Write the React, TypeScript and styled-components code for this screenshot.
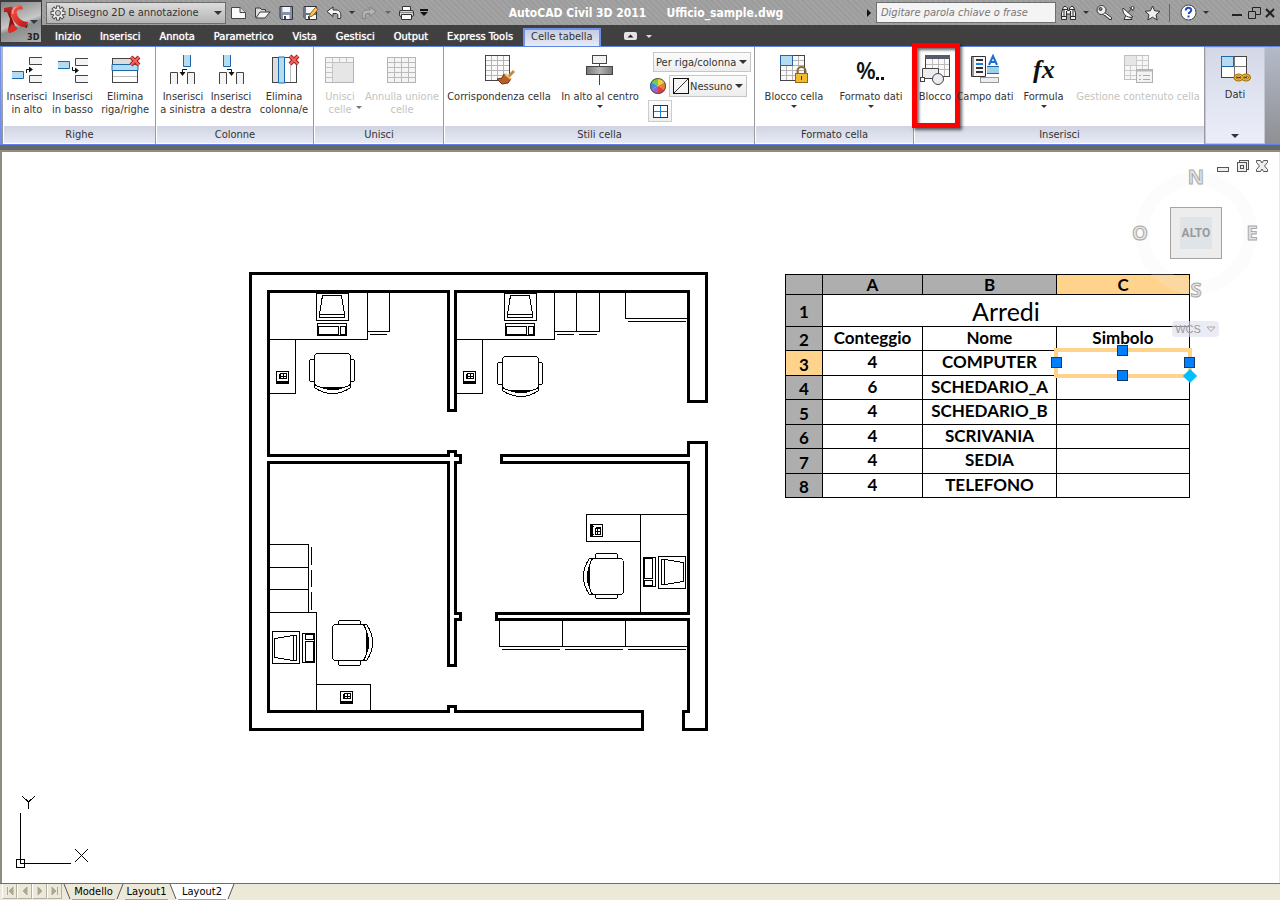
import React from "react";
import styled, { createGlobalStyle, css } from "styled-components";

const uiFont = `"DejaVu Sans Condensed", "DejaVu Sans", "Liberation Sans", sans-serif`;
const cadFont = `Lato, "Open Sans", sans-serif`;

const GlobalStyle = createGlobalStyle`
  * { box-sizing: border-box; }
  body { margin: 0; background: #fff; }
  button, input, select { font: inherit; color: inherit; margin: 0; }
  button { border: 0; padding: 0; background: none; cursor: pointer; }
  svg { display: block; flex: none; }
`;

const Window = styled.div`
  min-height: 100vh;
  display: flex;
  flex-direction: column;
  font: 11px/13px ${uiFont};
  color: #333;
`;

/* ---------- header ---------- */

const Header = styled.header`
  display: flex;
  background: #404040;
`;

const AppButton = styled.button`
  width: 42px;
  height: 43px;
  flex: none;
  background: linear-gradient(160deg, #808080, #c8c8c8 50%, #8c8c8c 60%, #b0b0b0);
  border: 1px solid #3c3c3c;
  border-top-width: 2px;
`;

const HeaderRows = styled.div`
  flex: 1;
  min-width: 0;
`;

const TitleRow = styled.div`
  height: 25px;
  display: flex;
  align-items: center;
  padding: 0 2px 0 4px;
  background: repeating-linear-gradient(45deg, #a3a3a3 0 2px, #9c9c9c 2px 4px);
`;

const SelectBox = styled.span<{ $width: number; $height: number; $plain?: boolean }>`
  position: relative;
  display: flex;
  align-items: center;
  width: ${(p) => p.$width}px;
  height: ${(p) => p.$height}px;
  background: ${(p) => (p.$plain ? "linear-gradient(#fbfbfb, #ededed)" : "linear-gradient(#dcdcdc, #b4b4b4)")};
  border: 1px solid ${(p) => (p.$plain ? "#c6c6c6" : "#6c6c6c")};
`;

const Select = styled.select<{ $left: number }>`
  appearance: none;
  width: 100%;
  height: 100%;
  border: 0;
  outline: 0;
  background: none;
  padding: 0 0 0 ${(p) => p.$left}px;
`;

const SelectArt = styled.span<{ $side: "left" | "right" }>`
  position: absolute;
  ${(p) => p.$side}: 3px;
  pointer-events: none;
`;

const QuickTools = styled.div`
  display: flex;
  align-items: center;
`;

const ToolButton = styled.button<{ $width?: number; $space?: number }>`
  width: ${(p) => p.$width ?? 24}px;
  height: 20px;
  margin-left: ${(p) => p.$space ?? 0}px;
  flex: none;
  display: flex;
  align-items: center;
  justify-content: center;
`;

const Title = styled.h1`
  flex: 1;
  margin: 0;
  display: flex;
  justify-content: center;
  gap: 20px;
  white-space: nowrap;
  font: bold 12px/16px ${uiFont};
  color: #fff;
`;

const SearchInput = styled.input`
  width: 180px;
  height: 21px;
  border: 1px solid #6f6f6f;
  background: #f4f4f4;
  padding: 0 4px;
  font-style: italic;
  font-size: 11px;
  &::placeholder { color: #777; opacity: 1; }
`;

const Divider = styled.span`
  width: 1px;
  height: 18px;
  margin: 0 6px 0 5px;
  background: #666;
`;

const TabRow = styled.nav`
  height: 21px;
  display: flex;
  align-items: stretch;
  padding: 3px 0 0 4px;
`;

const Tab = styled.button<{ $active?: boolean }>`
  padding: 0 10px 0 9px;
  white-space: nowrap;
  line-height: 13px;
  padding-bottom: 2px;
  color: #fff;
  text-shadow: 0 0 1px #fff;
  ${(p) =>
    p.$active &&
    css`
      padding: 0 6px 3px;
      color: #333;
      text-shadow: none;
      background: linear-gradient(#c5cce0, #e8ebf5);
      border: 2px solid #6f8fe8;
      border-width: 2px 2px 0;
    `}
`;

const TabTools = styled.div`
  display: flex;
  align-items: center;
  gap: 9px;
  padding: 0 0 2px 23px;
`;

const CollapseButton = styled.button`
  width: 13px;
  height: 8px;
`;

/* ---------- ribbon ---------- */

const Ribbon = styled.section`
  display: flex;
  height: 99px;
  padding-left: 2px;
  border-left: 1px solid #6f8fe8;
  border-top: 1px solid #5f84e6;
  border-bottom: 1px solid #5f84e6;
  background: linear-gradient(#b4bac8, #8f8f94);
`;

const RibbonEdge = styled.div`
  height: 7px;
  background: #686868;
  border-bottom: 2px solid #8f8d80;
`;

const Panel = styled.div<{ $width: number }>`
  width: ${(p) => p.$width}px;
  flex: none;
  display: flex;
  flex-direction: column;
  background: #fff;
  border-right: 1px solid #9a9a9e;
`;

const PanelBody = styled.div<{ $left?: number }>`
  flex: 1;
  display: flex;
  align-items: flex-start;
  padding: 7px 0 0 ${(p) => p.$left ?? 1}px;
`;

const PanelTitle = styled.h2`
  margin: 0 0 1px 1px;
  height: 17px;
  font: 11px/17px ${uiFont};
  text-align: center;
  background: linear-gradient(#d0d4e2, #e8ebf6);
`;

const BigButton = styled.button<{ $width: number }>`
  position: relative;
  width: ${(p) => p.$width}px;
  display: flex;
  flex-direction: column;
  align-items: center;
  white-space: nowrap;
  &:disabled { color: #c4c4bc; }
`;

const BigLabel = styled.span`
  margin-top: 4px;
`;

const DropMark = styled.span`
  height: 6px;
  display: flex;
  align-items: center;
`;

const SideMark = styled.span`
  position: absolute;
  right: 3px;
  bottom: 7px;
`;

const StyleControls = styled.div`
  display: flex;
  flex-direction: column;
  gap: 3px;
  margin-top: -2px;
`;

const ControlRow = styled.div<{ $left?: number }>`
  display: flex;
  align-items: center;
  gap: 3px;
  padding-left: ${(p) => p.$left ?? 0}px;
`;

const BorderButton = styled.button`
  width: 24px;
  height: 22px;
  display: flex;
  align-items: center;
  justify-content: center;
  border: 1px solid #ccc;
  background: linear-gradient(#fcfcfc, #eee);
`;

const HighlightFrame = styled.span`
  position: absolute;
  left: -3px;
  top: -11px;
  width: 48px;
  height: 85px;
  border: 5px solid #f00;
  pointer-events: none;
  box-shadow: 2px 2px 3px rgba(0, 0, 0, 0.6), inset 2px 2px 3px rgba(0, 0, 0, 0.6);
`;

const DataPanel = styled.button`
  width: 60px;
  display: flex;
  flex-direction: column;
  align-items: center;
  padding: 6px 0 5px;
  border: 1px solid #c4c8d4;
  background: linear-gradient(#d4d8e6, #eceefa);
`;

const DataMark = styled.span`
  margin-top: auto;
`;

/* ---------- drawing area ---------- */

const Canvas = styled.main`
  position: relative;
  flex: 1;
  min-height: 640px;
  overflow: hidden;
  background: #fff;
  border-left: 2px solid #8f8d80;
  border-right: 1px solid #ece9d8;
`;

const PlanPlace = styled.div`
  position: absolute;
  left: 238px;
  top: 108px;
`;

const TablePlace = styled.div`
  position: absolute;
  left: 783px;
  top: 122px;
`;

const CompassPlace = styled.div`
  position: absolute;
  right: 15px;
  top: 9px;
`;

const WindowButtons = styled.div`
  position: absolute;
  right: 8px;
  top: 4px;
  display: flex;
`;

const UcsPlace = styled.div`
  position: absolute;
  left: 13px;
  bottom: 15px;
`;

const WcsButton = styled.button`
  position: absolute;
  right: 60px;
  top: 169px;
  width: 47px;
  height: 16px;
  display: flex;
  align-items: center;
  justify-content: center;
  gap: 5px;
  border-radius: 4px;
  background: rgba(222, 222, 238, 0.6);
  color: #999;
  font: 11px/15px "Liberation Sans", sans-serif;
`;

const Schedule = styled.table`
  width: 405px;
  table-layout: fixed;
  border-collapse: collapse;
  font: bold 17px/19px ${cadFont};
  color: #000;
  th, td { border: 1px solid #000; padding: 0; text-align: center; }
  tr { height: 25px; }
  tbody th { padding-top: 2px; }
  tbody td { padding-bottom: 3px; }
  tbody tr:nth-child(even) { height: 24px; }
`;

const LetterRow = styled.tr`
  && { height: 20px; }
  th { line-height: 17px; }
`;

const CaptionRow = styled.tr`
  && { height: 32px; }
  && td {
    padding: 0;
    font-size: 25px;
    line-height: 28px;
    font-weight: normal;
  }
`;

const Heading = styled.th<{ $selected?: boolean; $wide?: number }>`
  width: ${(p) => (p.$wide ? `${p.$wide}px` : "auto")};
  background: ${(p) => (p.$selected ? "#ffd38c" : "#aeaeae")};
`;

const GripCell = styled.td`
  position: relative;
`;

const GripFrame = styled.span`
  position: absolute;
  inset: -3px;
  border: 4px solid #ffd38c;
`;

const Grip = styled.span<{ $at: "top" | "right" | "bottom" | "left" }>`
  position: absolute;
  width: 11px;
  height: 11px;
  background: #0080ff;
  border: 1px solid #123c66;
  ${(p) => (p.$at === "top" || p.$at === "bottom" ? "left: calc(50% - 6px);" : "top: calc(50% - 6px);")}
  ${(p) => p.$at}: -6px;
`;

const DiamondGrip = styled.span`
  position: absolute;
  right: -6px;
  bottom: -6px;
  width: 10px;
  height: 10px;
  background: #00bfff;
  transform: rotate(45deg);
`;

/* ---------- layout tabs ---------- */

const LayoutBar = styled.footer`
  height: 17px;
  display: flex;
  padding-left: 2px;
  background: #ece9d8;
  border-top: 1px solid #716f64;
  color: #000;
`;

const PageButton = styled.button`
  width: 15px;
  height: 15px;
  display: flex;
  align-items: center;
  justify-content: center;
  border-right: 1px solid #b4b1a0;
  border-bottom: 1px solid #b4b1a0;
  border-left: 1px solid #fff;
`;

const LayoutTab = styled.button<{ $active?: boolean; $width: number }>`
  width: ${(p) => p.$width}px;
  height: 16px;
  line-height: 15px;
  background: ${(p) => (p.$active ? "#fff" : "#ece9d8")};
  border-bottom: 1px solid #a5a294;
`;

/* ---------- icons ---------- */

const Arrow = ({ size = 5, color = "#333" }: { size?: number; color?: string }) => (
  <svg width={size + 1} height={(size + 1) / 2} viewBox="0 0 6 3">
    <path d="M0 0H6L3 3Z" fill={color} />
  </svg>
);

const LogoIcon = () => (
  <svg width="40" height="40" viewBox="0 0 40 40">
    <defs>
      <linearGradient id="ribbonRed" x1="0" y1="0" x2="1" y2="1">
        <stop offset="0" stopColor="#f0574c" />
        <stop offset="0.5" stopColor="#e5352d" />
        <stop offset="1" stopColor="#b5120f" />
      </linearGradient>
      <linearGradient id="pillarRed" x1="0" y1="0" x2="0" y2="1">
        <stop offset="0" stopColor="#c42d28" />
        <stop offset="0.5" stopColor="#7c100e" />
        <stop offset="1" stopColor="#c81d18" />
      </linearGradient>
    </defs>
    <path d="M3 6 11 4.500 12 8 10 14 14 24 16 27 8 31 7 28 9 17 6 10 3 10Z" fill="url(#pillarRed)" />
    <path d="M7 28 11 22 17 26 14 29 9 31Z" fill="#dd2a24" />
    <path d="M21 4C14 2 9 7 10 13 12 19 16 25 23 25L27 20C21 20 17 16 16 12 15 8 17 7 22 7.500Z" fill="url(#ribbonRed)" />
    <path d="M11 12C10 7 14 3 20 4.500 15 4.500 12 7 12.500 12Z" fill="#ff9a8c" />
    <path d="M23 25 26 22 27 20 26 26Z" fill="#7c100e" />
    <path d="M29 18H37L33 22Z" fill="#2f3a48" />
    <text x="26" y="38" fontSize="9" fontWeight="bold" fill="#222" fontFamily="DejaVu Sans Condensed, sans-serif">3D</text>
  </svg>
);

const GearIcon = () => (
  <svg width="16" height="16" viewBox="0 0 16 16">
    <g stroke="#555" strokeWidth="4">
      <path d="M8 0.500V15.500M0.500 8H15.500M2.700 2.700 13.300 13.300M13.300 2.700 2.700 13.300" />
    </g>
    <g stroke="#eee" strokeWidth="2">
      <path d="M8 1.500V14.500M1.500 8H14.500M3.400 3.400 12.600 12.600M12.600 3.400 3.400 12.600" />
    </g>
    <circle cx="8" cy="8" r="4.500" fill="#e8e8e8" />
    <circle cx="8" cy="8" r="2.500" fill="#ccc" stroke="#555" />
  </svg>
);

const NewIcon = () => (
  <svg width="17" height="14" viewBox="0 0 17 14">
    <path d="M1.500 1.500H10L15.500 6.500V12.500H1.500Z" fill="#fafafa" stroke="#444" />
    <path d="M10 1.500V6.500H15.500" fill="#ddd" stroke="#444" />
  </svg>
);

const OpenIcon = () => (
  <svg width="17" height="14" viewBox="0 0 17 14" stroke="#3a3a3a" strokeLinejoin="round">
    <path d="M1.500 11.500V2H6L7.500 3.500H11.500V5.500" fill="#ddd" />
    <path d="M2 12 6 6H16L11 12Z" fill="#f6f6f6" />
  </svg>
);

const SaveIcon = ({ pencil }: { pencil?: boolean }) => (
  <svg width="17" height="16" viewBox="0 0 17 16">
    <path d="M2 1.500H14.500V14.500H3.500L2 13Z" fill={pencil ? "#f4f4f4" : "#8792a6"} stroke="#2f3540" />
    {pencil && <path d="M2 2H4V14H2ZM2 8H14V10H2Z" fill="#6d7688" />}
    <path d="M4.500 2H12V7H4.500Z" fill="#f6f6f6" />
    <path d="M5 10H11.500V14H5Z" fill="#fff" />
    <path d="M6 11H8V14H6Z" fill="#3d4450" />
    {pencil && <path d="M8 9 13.500 2.500 16 4.500 10.500 11 7.500 12Z" fill="#f9c655" stroke="#9a5a16" />}
  </svg>
);

const UndoIcon = ({ flip, faded }: { flip?: boolean; faded?: boolean }) => (
  <svg width="16" height="14" viewBox="0 0 16 14">
    <path
      transform={flip ? "translate(16 0) scale(-1 1)" : undefined}
      d="M1 5.500 7 1V4H10C14 4 15.500 7 14.500 12.500H11.500C12.500 8.500 11.500 7.500 10 7.500H7V10.500Z"
      fill={faded ? "#b4b4b4" : "#f4f4f4"}
      stroke={faded ? "#838383" : "#333"}
    />
  </svg>
);

const PrintIcon = () => (
  <svg width="17" height="16" viewBox="0 0 17 16" stroke="#333">
    <path d="M4.500 5V1.500H12.500V5" fill="#fff" />
    <rect x="1.500" y="5.500" width="14" height="6" rx="1.500" fill="#d8d8d8" />
    <path d="M3.500 9.500H13.500V14.500H3.500Z" fill="#fafafa" />
    <path d="M2 7.500H15" stroke="#888" />
  </svg>
);

const CustomizeIcon = () => (
  <svg width="8" height="7" viewBox="0 0 8 7">
    <path d="M0 0H8V2H0ZM0 3H8L4 7Z" fill="#111" />
  </svg>
);

const BinocularsIcon = () => (
  <svg width="17" height="16" viewBox="0 0 17 16" fill="#eee" stroke="#2c2c2c">
    <path d="M3 3 4 1.500H6L7.500 3V5.500H9.500V3L11 1.500H13L14 3 15.500 8V14.500H10.500V9H6.500V14.500H1.500V8Z" />
    <path d="M1.500 11.500H6.500M10.500 11.500H15.500M3 4.500H7M10 4.500H14M6.500 9V6M10.500 9V6M4 5V11M13 5V11" fill="none" />
  </svg>
);

const KeyIcon = () => (
  <svg width="17" height="16" viewBox="0 0 17 16" fill="#eee" stroke="#333">
    <path d="M8 7 15.500 12.500 15.500 14.500 13 14.500 12.500 13 10.500 12.500 10 11 8 10.500 6 8.500Z" />
    <circle cx="5.500" cy="5" r="4.500" />
    <circle cx="4.500" cy="4" r="1.500" fill="#888" />
    <path d="M9 9 14 13" stroke="#fff" />
  </svg>
);

const DishIcon = () => (
  <svg width="16" height="16" viewBox="0 0 16 16" stroke="#333">
    <path d="M6 10 4 14.500H12L9 11" fill="#f4f4f4" />
    <path d="M3 3C2 8 6 13.500 13 12Z" fill="#fff" />
    <path d="M8 7.500 12 3.500M9.500 2.500 13.500 6" fill="none" />
    <circle cx="12.500" cy="3" r="1.500" fill="#fff" />
  </svg>
);

const StarIcon = () => (
  <svg width="17" height="16" viewBox="0 0 17 16">
    <path d="M8.500 1 10.600 5.800 16 6.300 12 9.800 13.200 15 8.500 12.200 3.800 15 5 9.800 1 6.300 6.400 5.800Z" fill="#eee" stroke="#333" />
  </svg>
);

const HelpIcon = () => (
  <svg width="17" height="17" viewBox="0 0 17 17">
    <circle cx="8.500" cy="8.500" r="7.500" fill="#fff" stroke="#444" />
    <path d="M5.800 6.500C5.800 3 11.300 3 11.300 6.200 11.300 8 8.700 8.200 8.700 10" fill="none" stroke="#1d4fc4" strokeWidth="2" />
    <rect x="7.500" y="11.500" width="2" height="2" fill="#1d4fc4" />
  </svg>
);

const Big = ({ children }: { children: React.ReactNode }) => (
  <svg width="32" height="32" viewBox="0 0 32 32">{children}</svg>
);

const RowAboveIcon = () => (
  <Big>
    <path d="M31 3.500H18.500V10.500H31M31 21.500H18.500V28.500H31" fill="#f4f4f6" stroke="#444" />
    <path d="M1 17.500H12.500V24.500H1" fill="#b5dcee" stroke="#1c68ad" />
    <path d="M15.500 19V15.500H19" fill="none" stroke="#111" />
    <path d="M18 12.500 22 15.500 18 18.500Z" fill="#111" />
  </Big>
);

const RowBelowIcon = () => (
  <Big>
    <path d="M31 4.500H18.500V11.500H31M31 21.500H18.500V28.500H31" fill="#f4f4f6" stroke="#444" />
    <path d="M1 7.500H12.500V14.500H1" fill="#b5dcee" stroke="#1c68ad" />
    <path d="M15.500 13V16.500H19" fill="none" stroke="#111" />
    <path d="M18 13.500 22 16.500 18 19.500Z" fill="#111" />
  </Big>
);

const Cross = ({ x, y }: { x: number; y: number }) => (
  <g transform={`translate(${x} ${y})`}>
    <path d="M1 1 9 9M9 1 1 9" stroke="#a51d1d" strokeWidth="4" />
    <path d="M1 1 9 9M9 1 1 9" stroke="#f4655f" strokeWidth="2" />
  </g>
);

const DeleteRowIcon = () => (
  <Big>
    <rect x="3.500" y="4.500" width="25" height="24" fill="#fff" stroke="#444" />
    <path d="M4 5H28V10H4Z" fill="#ddd" />
    <path d="M3 10.500H29V16.500H3Z" fill="#b5dcee" stroke="#1c68ad" />
    <path d="M4 22.500H28" stroke="#bbb" />
    <Cross x={21} y={2} />
  </Big>
);

const ColLeftIcon = () => (
  <Big>
    <path d="M16.500 1V12.500H23.500V1" fill="#b5dcee" stroke="#1c68ad" />
    <path d="M3.500 30V18.500H10.500V30M20.500 30V18.500H27.500V30" fill="#f4f4f6" stroke="#444" />
    <path d="M20 15.500H15.500V18" fill="none" stroke="#111" />
    <path d="M12.500 18 15.500 22 18.500 18Z" fill="#111" />
  </Big>
);

const ColRightIcon = () => (
  <Big>
    <path d="M8.500 1V12.500H15.500V1" fill="#b5dcee" stroke="#1c68ad" />
    <path d="M4.500 30V18.500H11.500V30M21.500 30V18.500H28.500V30" fill="#f4f4f6" stroke="#444" />
    <path d="M12 15.500H16.500V18" fill="none" stroke="#111" />
    <path d="M13.500 18 16.500 22 19.500 18Z" fill="#111" />
  </Big>
);

const DeleteColIcon = () => (
  <Big>
    <rect x="4.500" y="3.500" width="24" height="25" fill="#fff" stroke="#444" />
    <path d="M5 4H10V28H5Z" fill="#ddd" />
    <path d="M10.500 3V29H16.500V3Z" fill="#b5dcee" stroke="#1c68ad" />
    <path d="M22.500 4V28" stroke="#bbb" />
    <Cross x={21} y={1} />
  </Big>
);

const MergeIcon = () => (
  <Big>
    <rect x="1.500" y="3.500" width="28" height="25" fill="#f4f4f4" stroke="#b4b4b4" />
    <path d="M2 8.500H29M8.500 4V28M15.500 4V8M22.500 4V8M2 13.500H8M2 18.500H8M2 23.500H8" stroke="#c4c4c4" />
    <path d="M9 9H29V28H9Z" fill="#e6e6e6" />
  </Big>
);

const UnmergeIcon = () => (
  <Big>
    <rect x="1.500" y="3.500" width="28" height="25" fill="#f4f4f4" stroke="#b4b4b4" />
    <path d="M2 8.500H29M2 13.500H29M2 18.500H29M2 23.500H29M8.500 4V28M15.500 4V28M22.500 4V28" stroke="#bbb" />
  </Big>
);

const MatchIcon = () => (
  <Big>
    <rect x="2.500" y="1.500" width="24" height="25" fill="#fafafa" stroke="#444" />
    <path d="M3 6.500H26M3 11.500H26M3 16.500H26M3 21.500H26M8.500 2V26M14.500 2V26M20.500 2V26" stroke="#b4b4b4" />
    <path d="M31 17 26 22" stroke="#c08a4a" strokeWidth="3" />
    <path d="M21 20 28 25 25 29 19 30 14 25 19 24Z" fill="#b4622a" stroke="#6b3512" />
    <path d="M22 20 28 25" stroke="#f0c26a" strokeWidth="2" />
  </Big>
);

const AlignTopIcon = () => (
  <svg width="32" height="32" viewBox="0 0 32 32">
    <defs>
      <linearGradient id="bar" x2="1">
        <stop offset="0" stopColor="#777" />
        <stop offset="0.5" stopColor="#b4b4b4" />
        <stop offset="1" stopColor="#777" />
      </linearGradient>
    </defs>
    <rect x="8.500" y="1.500" width="14" height="8" fill="#f2f2f4" stroke="#444" />
    <path d="M15.500 10V31" stroke="#444" />
    <rect x="2.500" y="12.500" width="26" height="8" fill="url(#bar)" stroke="#444" />
  </svg>
);

const WheelIcon = () => (
  <svg width="16" height="16" viewBox="0 0 16 16">
    <path d="M8 8 1 4A8 8 0 0 1 8 0Z" fill="#7ac74a" />
    <path d="M8 8V0A8 8 0 0 1 15 4Z" fill="#f0d13a" />
    <path d="M8 8 15 4A8 8 0 0 1 15 12Z" fill="#ee7a2c" />
    <path d="M8 8 15 12A8 8 0 0 1 8 16Z" fill="#d9423c" />
    <path d="M8 8V16A8 8 0 0 1 1 12Z" fill="#a45ad0" />
    <path d="M8 8 1 12A8 8 0 0 1 1 4Z" fill="#3b8fe0" />
    <circle cx="8" cy="8" r="7.500" fill="none" stroke="#555" />
  </svg>
);

const NoneIcon = () => (
  <svg width="16" height="16" viewBox="0 0 16 16">
    <rect x="0.500" y="0.500" width="15" height="15" fill="#f4f4f4" stroke="#111" />
    <path d="M1 15 15 1" stroke="#333" />
  </svg>
);

const BordersIcon = () => (
  <svg width="15" height="13" viewBox="0 0 15 13">
    <rect x="0.500" y="0.500" width="14" height="12" fill="#fff" stroke="#333" />
    <path d="M7.500 1V12M1 6.500H14" stroke="#1b80dd" />
  </svg>
);

const LockCellIcon = () => (
  <Big>
    <rect x="2.500" y="1.500" width="24" height="25" fill="#fafafa" stroke="#444" />
    <path d="M3 6.500H26M3 11.500H26M3 16.500H26M3 21.500H26M8.500 12V26M14.500 2V26M20.500 2V26" stroke="#b4b4b4" />
    <rect x="2.500" y="1.500" width="12" height="10" fill="#b5dcee" stroke="#1c68ad" />
    <path d="M19.500 20V17A4 4 0 0 1 27.500 17V20" fill="none" stroke="#8a6a3a" strokeWidth="2" />
    <rect x="17.500" y="19.500" width="12" height="9" fill="#f0bb2f" stroke="#96651a" />
    <path d="M23.500 22V26" stroke="#553508" />
  </Big>
);

const FormatIcon = () => (
  <svg width="32" height="32" viewBox="0 0 32 32">
    <text x="1" y="25" fontSize="23" fontFamily="Open Sans, sans-serif" fontWeight="600" fill="#111">
      %
    </text>
    <path d="M21 23H24V26H21ZM26 23H29V26H26Z" fill="#111" />
  </svg>
);

const BlockIcon = () => (
  <Big>
    <rect x="6.500" y="1.500" width="24" height="21" fill="#fafafa" stroke="#444" />
    <path d="M6 1H31V5H6Z" fill="#565b68" />
    <path d="M7 10.500H30M7 15.500H30M13.500 5V15M19.500 5V15M25.500 5V22" stroke="#bbb" />
    <path d="M3.500 24V14.500H19.500V24.500H6" fill="#ececf0" stroke="#444" />
    <rect x="1.500" y="23.500" width="4" height="4" fill="#fff" stroke="#444" />
    <circle cx="19" cy="25" r="5.500" fill="#ececf0" stroke="#444" />
  </Big>
);

const FieldIcon = () => (
  <Big>
    <path d="M2.500 2.500H16.500V22.500H2.500Z" fill="#f8f8fa" stroke="#333" />
    <path d="M3 3H5V22H3Z" fill="#999" />
    <path d="M7 6H14M7 14H14M7 18H14" stroke="#333" strokeWidth="2" />
    <path d="M7 10H14" stroke="#1b80dd" strokeWidth="2" />
    <path d="M20 11 24 2 28 11M21 8H27" fill="none" stroke="#1b70d0" strokeWidth="2" />
    <rect x="18" y="13" width="12" height="6" fill="#9fd0e6" />
    <path d="M18 12.500H30M18 19.500H30" stroke="#1c68ad" />
    <rect x="11.500" y="23.500" width="18" height="5" fill="#ececf0" stroke="#999" />
  </Big>
);

const FormulaIcon = () => (
  <svg width="32" height="32" viewBox="0 0 32 32">
    <text x="5" y="24" fontSize="26" fontStyle="italic" fontWeight="bold" fontFamily="Liberation Serif, serif" fill="#111">
      fx
    </text>
  </svg>
);

const ManageIcon = () => (
  <Big>
    <rect x="2.500" y="1.500" width="24" height="24" fill="#f6f6f6" stroke="#c0c0c0" />
    <path d="M3 6.500H26M3 11.500H26M3 16.500H26M3 21.500H26M8.500 2V25M14.500 2V25M20.500 2V25" stroke="#ccc" />
    <path d="M3 2H14V11H3Z" fill="#e6e6e6" />
    <rect x="14.500" y="15.500" width="16" height="13" fill="#f2f2f2" stroke="#b0b0b0" />
    <path d="M15 16.500H30" stroke="#b8b8b8" strokeWidth="2" />
    <path d="M17 21.500H19M21 21.500H28M17 25.500H19M21 25.500H28" stroke="#aaa" />
  </Big>
);

const DataIcon = () => (
  <svg width="32" height="30" viewBox="0 0 32 30">
    <rect x="2.500" y="2.500" width="25" height="21" fill="#fff" stroke="#444" />
    <path d="M3 12.500H27M15.500 3V23" stroke="#777" />
    <rect x="2.500" y="2.500" width="12" height="10" fill="#b5dcee" stroke="#1c68ad" />
    <g fill="none" stroke="#a9730a" strokeWidth="3">
      <ellipse cx="19.500" cy="23.500" rx="3.500" ry="2.500" />
      <ellipse cx="27" cy="23.500" rx="3.500" ry="2.500" />
    </g>
    <g fill="none" stroke="#f4c23a">
      <ellipse cx="19.500" cy="23.500" rx="3.500" ry="2.500" />
      <ellipse cx="27" cy="23.500" rx="3.500" ry="2.500" />
    </g>
  </svg>
);

/* ---------- floor plan ---------- */

type Place = { x: number; y: number; turn?: number };
const place = ({ x, y, turn = 0 }: Place) => `translate(${x} ${y}) rotate(${turn})`;

const Computer = (p: Place) => (
  <g transform={place(p)}>
    <rect x="-16" y="-14" width="32" height="27" />
    <path d="M-13 7 -10 -12H9L12 7M-13 7H12V10H-13Z" />
    <rect x="-15" y="16" width="29" height="12" />
    <rect x="-14" y="19" width="20" height="8" />
    <rect x="8" y="19" width="5" height="8" />
  </g>
);

const Phone = (p: Place) => (
  <g transform={place(p)}>
    <rect x="-6" y="-6" width="12" height="12" />
    <rect x="-2" y="-4" width="6" height="5" />
    <path d="M1 -4V1M-2 -1H4M-6 4H6M-6 5H6M-4 3V4M4 3V4M-3 -4V1" />
  </g>
);

const Chair = (p: Place) => (
  <g transform={place(p)}>
    <path d="M-16 -17H16L18 -15V14M-18 14V-15L-16 -17" />
    <path d="M-18 -11H-21Q-23 -11 -23 -9V9Q-23 11 -21 11H-18M18 -11H20Q22 -11 22 -9V9Q22 11 20 11H18" />
    <path d="M-18 14Q-10 19 0 18Q10 19 18 14V17Q10 23 0 23Q-10 23 -18 17Z" />
    <path d="M-12 17H12M-6 19H6" />
  </g>
);

const FloorPlan = () => (
  <svg
    width="480"
    height="480"
    viewBox="240 260 480 480"
    fill="none"
    stroke="#000"
    shapeRendering="crispEdges"
    role="img"
    aria-label="Pianta ufficio"
  >
    <g strokeWidth="3" strokeLinejoin="round">
      <path d="M642.500 729.500H250.500V273.500H706.500V401.500H688.500V291.500H455.500V410.500H448.500V291.500H268.500V455.500H448.500V451.500H455.500V455.500H460.500V462.500H455.500V613.500H460.500V619.500H455.500V665.500H448.500V462.500H268.500V711.500H448.500V706.500H455.500V711.500H642.500Z" />
      <path d="M706.500 442.500H688.500V455.500H501.500V462.500H688.500V613.500H496.500V619.500H688.500V711.500H683.500V729.500H706.500Z" />
    </g>
    <path d="M269 339.500H367.500V293M367.500 331.500H389.500V293M370 334.500H387M295.500 340V393.500H269" />
    <path d="M457 339.500H554.500V293M554.500 331.500H599.500V293M576.500 293V331M557 334.500H574M579 334.500H597M482.500 340V393.500H457" />
    <path d="M625.500 293V318.500H688M628 321.500H686" />
    <path d="M269 544.500H308.500V612.500M269 567.500H308M269 589.500H308M269 612.500H316.500V711M311.500 547V565M311.500 570V587M311.500 592V610" />
    <path d="M316.500 684.500H370.500V711" />
    <path d="M688 514.500H586.500V541.500H640.500M640.500 514V613" />
    <path d="M499.500 620V646.500H688M562.500 620V646M625.500 620V646M502 649.500H560M565 649.500H623M628 649.500H686" />
    <Computer x={332.5} y={307.5} />
    <Computer x={520.5} y={307.5} />
    <Computer x={286.5} y={647.5} turn={-90} />
    <Computer x={671.5} y={572.5} turn={90} />
    <Phone x={282.5} y={377.5} />
    <Phone x={469.5} y={377.5} />
    <Phone x={346.5} y={697.5} />
    <Phone x={596.5} y={530.5} turn={90} />
    <Chair x={332.5} y={370.5} />
    <Chair x={520.5} y={373.5} />
    <Chair x={349.5} y={642.5} turn={-90} />
    <Chair x={606.5} y={576.5} turn={90} />
  </svg>
);

const Compass = () => (
  <svg width="136" height="144" viewBox="0 0 136 144">
    <circle cx="68" cy="72" r="54" fill="none" stroke="#fff" strokeOpacity="0.2" strokeWidth="14" />
    <circle cx="68" cy="72" r="54" fill="none" stroke="#000" strokeOpacity="0.012" strokeWidth="14" />
    <rect x="42.500" y="46.500" width="51" height="51" fill="#ededed" stroke="#a4a4a4" />
    <rect x="52" y="56" width="32" height="32" fill="#dfe4e8" />
    <text x="68" y="76" textAnchor="middle" fontSize="12" fontWeight="bold" fontFamily="Roboto, sans-serif" fill="#9a9a9a">
      ALTO
    </text>
    <g fontSize="20" fontWeight="bold" fontFamily="Open Sans, sans-serif" textAnchor="middle" fill="#e4e4e4" stroke="#aaa">
      <text x="68" y="23">N</text>
      <text x="12" y="79">O</text>
      <text x="124" y="79">E</text>
      <text x="68" y="136">S</text>
    </g>
  </svg>
);

const UcsIcon = () => (
  <svg width="80" height="75" viewBox="0 0 80 75" fill="none" stroke="#000" shapeRendering="crispEdges">
    <path d="M5.500 20V70.500H56" />
    <rect x="1.500" y="66.500" width="8" height="8" />
    <path d="M7 3 13.500 9 20 3M13.500 9V16M60 56 73 69M73 56 60 69" />
  </svg>
);

const WinMin = () => (
  <svg width="14" height="14" viewBox="0 0 14 14">
    <rect x="1.500" y="8.500" width="11" height="4" fill="#eee" stroke="#555" />
  </svg>
);
const WinMax = () => (
  <svg width="14" height="14" viewBox="0 0 14 14" fill="#eee" stroke="#555">
    <rect x="3.500" y="1.500" width="9" height="9" />
    <rect x="1.500" y="3.500" width="9" height="9" />
    <rect x="4.500" y="6.500" width="3" height="3" />
  </svg>
);
const WinClose = () => (
  <svg width="14" height="14" viewBox="0 0 14 14">
    <path d="M1.500 1.500H5.500L7 4 8.500 1.500H12.500V3.500L9.500 7 12.500 10.500V12.500H8.500L7 10 5.500 12.500H1.500V10.500L4.500 7 1.500 3.500Z" fill="#eee" stroke="#555" />
  </svg>
);

const Slant = ({ up, left, right }: { up?: boolean; left: string; right: string }) => (
  <svg width="10" height="16" viewBox="0 0 10 16">
    <path d={up ? "M0 0H8L2 16H0Z" : "M0 0H2L8 16H0Z"} fill={left} />
    <path d={up ? "M8 0H10V16H2Z" : "M2 0H10V16H8Z"} fill={right} />
    <path d={up ? "M8 0 2 15" : "M2 0 8 15"} stroke="#555" />
  </svg>
);

/* ---------- page ---------- */

type RibbonButtonProps = {
  width: number;
  icon: React.ReactNode;
  lines: string[];
  drop?: boolean;
  sideDrop?: boolean;
  disabled?: boolean;
  framed?: boolean;
};

const RibbonButton = ({ width, icon, lines, drop, sideDrop, disabled, framed }: RibbonButtonProps) => (
  <BigButton type="button" $width={width} disabled={disabled}>
    {icon}
    <BigLabel>
      {lines.map((line, i) => (
        <React.Fragment key={i}>
          {i > 0 && <br />}
          {line}
        </React.Fragment>
      ))}
    </BigLabel>
    {drop && (
      <DropMark>
        <Arrow />
      </DropMark>
    )}
    {sideDrop && (
      <SideMark>
        <Arrow color="#777" />
      </SideMark>
    )}
    {framed && <HighlightFrame />}
  </BigButton>
);

const menuTabs = ["Inizio", "Inserisci", "Annota", "Parametrico", "Vista", "Gestisci", "Output", "Express Tools"];

const items: [number, string][] = [
  [4, "COMPUTER"],
  [6, "SCHEDARIO_A"],
  [4, "SCHEDARIO_B"],
  [4, "SCRIVANIA"],
  [4, "SEDIA"],
  [4, "TELEFONO"],
];

const pagePaths = ["M3.500 2V10M9 2V10L5 6Z", "M8 2V10L4 6Z", "M4 2V10L8 6Z", "M8.500 2V10M3 2V10L7 6Z"];
const pageNames = ["Prima", "Precedente", "Successiva", "Ultima"];

export default function App() {
  return (
    <Window>
      <GlobalStyle />
      <Header>
        <AppButton type="button" aria-label="Menu applicazione">
          <LogoIcon />
        </AppButton>
        <HeaderRows>
          <TitleRow>
            <SelectBox $width={180} $height={22}>
              <SelectArt $side="left">
                <GearIcon />
              </SelectArt>
              <Select $left={21} aria-label="Area di lavoro">
                <option>Disegno 2D e annotazione</option>
              </Select>
              <SelectArt $side="right">
                <Arrow size={7} />
              </SelectArt>
            </SelectBox>
            <QuickTools>
              <ToolButton aria-label="Nuovo"><NewIcon /></ToolButton>
              <ToolButton aria-label="Apri"><OpenIcon /></ToolButton>
              <ToolButton aria-label="Salva"><SaveIcon /></ToolButton>
              <ToolButton aria-label="Salva con nome"><SaveIcon pencil /></ToolButton>
              <ToolButton aria-label="Annulla"><UndoIcon /></ToolButton>
              <ToolButton $width={11} aria-label="Elenco annulla"><Arrow /></ToolButton>
              <ToolButton aria-label="Ripeti"><UndoIcon flip faded /></ToolButton>
              <ToolButton $width={13} aria-label="Elenco ripeti"><Arrow color="#666" /></ToolButton>
              <ToolButton aria-label="Stampa"><PrintIcon /></ToolButton>
              <ToolButton $width={12} aria-label="Personalizza"><CustomizeIcon /></ToolButton>
            </QuickTools>
            <Title>
              <span>AutoCAD Civil 3D 2011</span>
              <span>Ufficio_sample.dwg</span>
            </Title>
            <ToolButton $width={14} aria-label="Comprimi ricerca">
              <svg width="4" height="8" viewBox="0 0 4 8"><path d="M0 0 4 4 0 8Z" fill="#111" /></svg>
            </ToolButton>
            <SearchInput aria-label="Cerca" placeholder="Digitare parola chiave o frase" />
            <ToolButton aria-label="Avvia ricerca"><BinocularsIcon /></ToolButton>
            <ToolButton $width={12} aria-label="Opzioni di ricerca"><Arrow /></ToolButton>
            <ToolButton aria-label="Chiave"><KeyIcon /></ToolButton>
            <ToolButton aria-label="Comunicazioni"><DishIcon /></ToolButton>
            <ToolButton aria-label="Preferiti"><StarIcon /></ToolButton>
            <Divider />
            <ToolButton aria-label="Guida"><HelpIcon /></ToolButton>
            <ToolButton $width={12} aria-label="Opzioni guida"><Arrow /></ToolButton>
            <ToolButton $width={20} $space={15} aria-label="Riduci a icona">
              <svg width="10" height="9" viewBox="0 0 10 9"><path d="M0 6H10V8H0Z" fill="#222" /></svg>
            </ToolButton>
            <ToolButton $width={14} aria-label="Ripristina">
              <svg width="13" height="12" viewBox="0 0 13 12" fill="#a0a0a0" stroke="#222">
                <path d="M4.500 0.500H12.500V7.500H4.500Z" />
                <path d="M0.500 4.500H7.500V11.500H0.500Z" />
              </svg>
            </ToolButton>
            <ToolButton $width={17} aria-label="Chiudi">
              <svg width="10" height="10" viewBox="0 0 10 10"><path d="M1 1 9 9M9 1 1 9" stroke="#222" strokeWidth="2" /></svg>
            </ToolButton>
          </TitleRow>
          <TabRow>
            {menuTabs.map((name) => (
              <Tab key={name} type="button">{name}</Tab>
            ))}
            <Tab type="button" $active>Celle tabella</Tab>
            <TabTools>
              <CollapseButton type="button" aria-label="Riduci barra">
                <svg width="13" height="8" viewBox="0 0 13 8">
                  <rect width="13" height="8" rx="2" fill="#e4e4e4" />
                  <path d="M3.500 5.500H9.500L6.500 2.500Z" fill="#222" />
                </svg>
              </CollapseButton>
              <Arrow color="#ddd" />
            </TabTools>
          </TabRow>
        </HeaderRows>
      </Header>

      <Ribbon>
        <Panel $width={153}>
          <PanelBody>
            <RibbonButton width={46} icon={<RowAboveIcon />} lines={["Inserisci", "in alto"]} />
            <RibbonButton width={46} icon={<RowBelowIcon />} lines={["Inserisci", "in basso"]} />
            <RibbonButton width={60} icon={<DeleteRowIcon />} lines={["Elimina", "riga/righe"]} />
          </PanelBody>
          <PanelTitle>Righe</PanelTitle>
        </Panel>
        <Panel $width={158}>
          <PanelBody $left={3}>
            <RibbonButton width={48} icon={<ColLeftIcon />} lines={["Inserisci", "a sinistra"]} />
            <RibbonButton width={48} icon={<ColRightIcon />} lines={["Inserisci", "a destra"]} />
            <RibbonButton width={58} icon={<DeleteColIcon />} lines={["Elimina", "colonna/e"]} />
          </PanelBody>
          <PanelTitle>Colonne</PanelTitle>
        </Panel>
        <Panel $width={130}>
          <PanelBody>
            <RibbonButton width={50} icon={<MergeIcon />} lines={["Unisci", "celle"]} sideDrop disabled />
            <RibbonButton width={74} icon={<UnmergeIcon />} lines={["Annulla unione", "celle"]} disabled />
          </PanelBody>
          <PanelTitle>Unisci</PanelTitle>
        </Panel>
        <Panel $width={311}>
          <PanelBody>
            <RibbonButton width={108} icon={<MatchIcon />} lines={["Corrispondenza cella"]} />
            <RibbonButton width={94} icon={<AlignTopIcon />} lines={["In alto al centro"]} drop />
            <StyleControls>
              <ControlRow $left={6}>
                <SelectBox $width={98} $height={20} $plain>
                  <Select $left={2} aria-label="Stile cella">
                    <option>Per riga/colonna</option>
                  </Select>
                  <SelectArt $side="right"><Arrow size={7} /></SelectArt>
                </SelectBox>
              </ControlRow>
              <ControlRow $left={3}>
                <WheelIcon />
                <SelectBox $width={78} $height={22} $plain>
                  <SelectArt $side="left"><NoneIcon /></SelectArt>
                  <Select $left={20} aria-label="Colore di sfondo">
                    <option>Nessuno</option>
                  </Select>
                  <SelectArt $side="right"><Arrow size={7} /></SelectArt>
                </SelectBox>
              </ControlRow>
              <ControlRow $left={1}>
                <BorderButton aria-label="Modifica bordi"><BordersIcon /></BorderButton>
              </ControlRow>
            </StyleControls>
          </PanelBody>
          <PanelTitle>Stili cella</PanelTitle>
        </Panel>
        <Panel $width={159}>
          <PanelBody>
            <RibbonButton width={76} icon={<LockCellIcon />} lines={["Blocco cella"]} drop />
            <RibbonButton width={78} icon={<FormatIcon />} lines={["Formato dati"]} drop />
          </PanelBody>
          <PanelTitle>Formato cella</PanelTitle>
        </Panel>
        <Panel $width={291}>
          <PanelBody>
            <RibbonButton width={40} icon={<BlockIcon />} lines={["Blocco"]} framed />
            <RibbonButton width={60} icon={<FieldIcon />} lines={["Campo dati"]} />
            <RibbonButton width={57} icon={<FormulaIcon />} lines={["Formula"]} drop />
            <RibbonButton width={132} icon={<ManageIcon />} lines={["Gestione contenuto cella"]} disabled />
          </PanelBody>
          <PanelTitle>Inserisci</PanelTitle>
        </Panel>
        <DataPanel type="button">
          <DataIcon />
          <BigLabel>Dati</BigLabel>
          <DataMark><Arrow size={7} /></DataMark>
        </DataPanel>
      </Ribbon>
      <RibbonEdge />

      <Canvas>
        <PlanPlace>
          <FloorPlan />
        </PlanPlace>
        <TablePlace>
          <Schedule>
            <thead>
              <LetterRow>
                <Heading $wide={37} />
                <Heading $wide={100}>A</Heading>
                <Heading $wide={134}>B</Heading>
                <Heading $wide={133} $selected>C</Heading>
              </LetterRow>
            </thead>
            <tbody>
              <CaptionRow>
                <Heading>1</Heading>
                <td colSpan={3}>Arredi</td>
              </CaptionRow>
              <tr>
                <Heading>2</Heading>
                <td>Conteggio</td>
                <td>Nome</td>
                <td>Simbolo</td>
              </tr>
              {items.map(([count, name], i) => (
                <tr key={name}>
                  <Heading $selected={i === 0}>{i + 3}</Heading>
                  <td>{count}</td>
                  <td>{name}</td>
                  {i === 0 ? (
                    <GripCell>
                      <GripFrame />
                      <Grip $at="top" />
                      <Grip $at="right" />
                      <Grip $at="bottom" />
                      <Grip $at="left" />
                      <DiamondGrip />
                    </GripCell>
                  ) : (
                    <td />
                  )}
                </tr>
              ))}
            </tbody>
          </Schedule>
        </TablePlace>
        <CompassPlace>
          <Compass />
        </CompassPlace>
        <WcsButton type="button">
          WCS
          <svg width="10" height="7" viewBox="0 0 10 7"><path d="M1 1H9L5 5.500Z" fill="none" stroke="#aaa" /></svg>
        </WcsButton>
        <WindowButtons>
          <ToolButton $width={20} aria-label="Riduci disegno"><WinMin /></ToolButton>
          <ToolButton $width={20} aria-label="Ripristina disegno"><WinMax /></ToolButton>
          <ToolButton $width={18} aria-label="Chiudi disegno"><WinClose /></ToolButton>
        </WindowButtons>
        <UcsPlace>
          <UcsIcon />
        </UcsPlace>
      </Canvas>

      <LayoutBar>
        {pagePaths.map((d, i) => (
          <PageButton key={d} type="button" aria-label={pageNames[i]}>
            <svg width="12" height="12" viewBox="0 0 12 12"><path d={d} fill="#aca899" stroke="#aca899" /></svg>
          </PageButton>
        ))}
        <Slant left="#ece9d8" right="#ece9d8" />
        <LayoutTab type="button" $width={43}>Modello</LayoutTab>
        <Slant up left="#ece9d8" right="#ece9d8" />
        <LayoutTab type="button" $width={43}>Layout1</LayoutTab>
        <Slant left="#ece9d8" right="#fff" />
        <LayoutTab type="button" $width={48} $active>Layout2</LayoutTab>
        <Slant up left="#fff" right="#ece9d8" />
      </LayoutBar>
    </Window>
  );
}
